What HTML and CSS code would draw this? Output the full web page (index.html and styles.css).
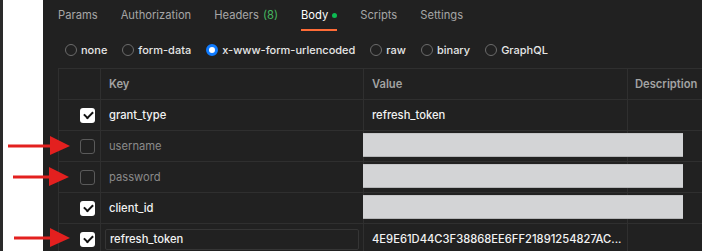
FILE: index.html
```html
<!DOCTYPE html>
<html lang="en">
<head>
    <meta charset="UTF-8">
    <title>Body | x-www-form-urlencoded</title>
    <link rel="stylesheet" href="styles.css">
</head>
<body>

    <div class="screen">
        <div class="edge"></div>
        <div class="gutter"></div>

        <!-- Request panel -->
        <div class="panel">
            <div class="tabs">
                <span class="tab">Params</span>
                <span class="tab">Authorization</span>
                <span class="tab">Headers <span class="count">(8)</span></span>
                <span class="tab active">Body <span class="dot"></span></span>
                <span class="tab">Scripts</span>
                <span class="tab">Settings</span>
            </div>

            <div class="body-types">
                <label class="radio"><span class="circle"></span>none</label>
                <label class="radio"><span class="circle"></span>form-data</label>
                <label class="radio"><span class="circle on"></span>x-www-form-urlencoded</label>
                <label class="radio"><span class="circle"></span>raw</label>
                <label class="radio"><span class="circle"></span>binary</label>
                <label class="radio"><span class="circle"></span>GraphQL</label>
            </div>

            <div class="kv-table">
                <div class="row head">
                    <div class="cell check"></div>
                    <div class="cell key">Key</div>
                    <div class="cell value">Value</div>
                    <div class="cell desc">Description</div>
                </div>
                <div class="row">
                    <div class="cell check"><span class="box checked"></span></div>
                    <div class="cell key">grant_type</div>
                    <div class="cell value">refresh_token</div>
                    <div class="cell desc"></div>
                </div>
                <div class="row off">
                    <div class="cell check"><span class="box"></span></div>
                    <div class="cell key">username</div>
                    <div class="cell value"><span class="redact"></span></div>
                    <div class="cell desc"></div>
                </div>
                <div class="row off">
                    <div class="cell check"><span class="box"></span></div>
                    <div class="cell key">password</div>
                    <div class="cell value"><span class="redact"></span></div>
                    <div class="cell desc"></div>
                </div>
                <div class="row">
                    <div class="cell check"><span class="box checked"></span></div>
                    <div class="cell key">client_id</div>
                    <div class="cell value"><span class="redact"></span></div>
                    <div class="cell desc"></div>
                </div>
                <div class="row">
                    <div class="cell check"><span class="box checked"></span></div>
                    <div class="cell key"><span class="editing">refresh_token</span></div>
                    <div class="cell value">4E9E61D44C3F38868EE6FF21891254827AC...</div>
                    <div class="cell desc"></div>
                </div>
            </div>
        </div>

        <!-- Annotation arrows -->
        <svg class="arrow a1" width="64" height="20" viewBox="0 0 64 20"><path d="M0 8.5h44v3H0z M42 0 L62 10 L42 19 z" fill="#e3201f"/></svg>
        <svg class="arrow a2" width="58" height="20" viewBox="0 0 58 20"><path d="M0 8.5h38v3H0z M36 0 L56 10 L36 19 z" fill="#e3201f"/></svg>
        <svg class="arrow a3" width="58" height="20" viewBox="0 0 58 20"><path d="M0 8.5h38v3H0z M36 0 L56 10 L36 19 z" fill="#e3201f"/></svg>
    </div>

</body>
</html>
```

FILE: styles.css
```css
/* General */
* {
    margin: 0;
    padding: 0;
    box-sizing: border-box;
}

body {
    font-family: 'Inter', 'Liberation Sans', sans-serif;
    font-size: 11.2px;
    background: #212121;
    overflow: hidden;
}

.screen {
    position: relative;
    display: flex;
    height: 251px;
}

.edge {
    width: 3px;
    background: #2a2a2a;
}

.gutter {
    width: 40px;
    background: #ffffff;
}

/* Panel */
.panel {
    flex: 1;
    background: #212121;
    overflow: hidden;
}

.tabs {
    display: flex;
    gap: 23px;
    height: 31px;
    padding-left: 15px;
}

.tab {
    display: flex;
    align-items: center;
    gap: 4px;
    color: #a6a6a6;
    border-bottom: 2px solid transparent;
    height: 31px;
    padding-top: 1px;
}

.tab .count {
    color: #45b760;
}

.tab.active {
    color: #ffffff;
    border-bottom-color: #ff6c37;
}

.tab .dot {
    width: 5px;
    height: 5px;
    border-radius: 50%;
    background: #0cbb52;
}

/* Body type radios */
.body-types {
    display: flex;
    align-items: center;
    gap: 15px;
    height: 37px;
    padding-left: 22px;
}

.radio {
    display: flex;
    align-items: center;
    gap: 4px;
    color: #e6e6e6;
    font-weight: 500;
    font-size: 11px;
}

.circle {
    width: 12px;
    height: 12px;
    border-radius: 50%;
    border: 1px solid #6b6b6b;
}

.circle.on {
    border: 3px solid #0f7bff;
    background: #ffffff;
}

/* Key / value table */
.kv-table {
    margin-left: 15px;
    width: 700px;
    border-top: 1px solid #2f2f2f;
    border-left: 1px solid #2f2f2f;
}

.row {
    display: flex;
    height: 31px;
    border-bottom: 1px solid #2f2f2f;
    color: #f2f2f2;
    font-weight: 500;
}

.row.head {
    color: #a3a3a3;
    font-weight: 600;
}

.row.off {
    color: #8a8a8a;
    font-weight: 400;
}

.cell {
    display: flex;
    align-items: center;
    border-right: 1px solid #2f2f2f;
    padding-left: 8px;
}

.cell.check {
    width: 42px;
    justify-content: flex-end;
    padding-right: 5px;
}

.cell.key {
    width: 263px;
}

.cell.value {
    position: relative;
    width: 264px;
}

.cell.desc {
    flex: 1;
    padding-left: 7px;
}

/* Checkboxes */
.box {
    width: 15px;
    height: 15px;
    border-radius: 3px;
    border: 1px solid #5a5a5a;
}

.box.checked {
    border: none;
    background: #ffffff;
    position: relative;
}

.box.checked::after {
    content: "";
    position: absolute;
    left: 4px;
    top: 3px;
    width: 7px;
    height: 4px;
    border-left: 2px solid #111;
    border-bottom: 2px solid #111;
    transform: rotate(-45deg);
}

.editing {
    display: flex;
    align-items: center;
    width: 254px;
    height: 21px;
    margin-left: -4px;
    padding-left: 4px;
    border: 1px solid #353535;
    border-radius: 2px;
}

/* Redacted value */
.redact {
    position: absolute;
    left: -1px;
    top: 2px;
    width: 320px;
    height: 24px;
    background: #d3d4d6;
    border-top: 1px solid #c4c5c7;
    border-bottom: 1px solid #b4b5b7;
}

/* Annotation arrows */
.arrow {
    position: absolute;
}

.a1 { left: 8px; top: 136px; }
.a2 { left: 13px; top: 167px; }
.a3 { left: 14px; top: 228px; }
```
